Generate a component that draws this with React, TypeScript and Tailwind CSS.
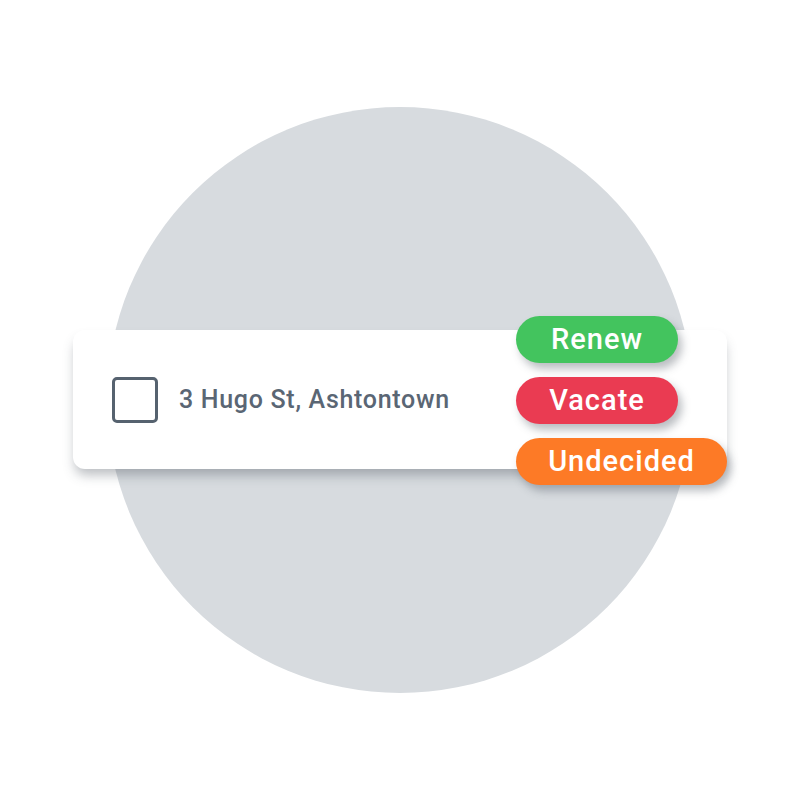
const pills = [
  { label: 'Renew', className: 'w-[162px] bg-[#43c45e]' },
  { label: 'Vacate', className: 'w-[162px] bg-[#ea3b52]' },
  { label: 'Undecided', className: 'w-[211px] bg-[#fd7a26]' },
]

export default function App() {
  return (
    <div
      className="relative flex h-[800px] w-[800px] items-center justify-center bg-white"
      style={{ fontFamily: 'Roboto, "Noto Sans", sans-serif' }}
    >
      <div className="size-[586px] rounded-full bg-[#d7dbdf]" />

      <div className="absolute left-[73px] top-[330px] flex h-[139px] w-[654px] items-center gap-[21px] rounded-[12px] bg-white pl-[39px] shadow-[0_8px_12px_-2px_rgba(60,70,80,0.35)]">
        <div className="size-[46px] rounded-[5px] border-[3.5px] border-[#56626f]" />
        <span className="text-[25px] font-medium tracking-[0.7px] text-[#5a6674]">
          3 Hugo St, Ashtontown
        </span>
      </div>

      <div className="absolute left-[516px] top-[316px] flex flex-col gap-[14px]">
        {pills.map((pill) => (
          <div
            key={pill.label}
            className={`flex h-[47px] items-center justify-center rounded-full pt-[1px] text-[29px] font-medium tracking-[1px] text-white shadow-[4px_6px_8px_rgba(60,70,80,0.35)] ${pill.className}`}
          >
            {pill.label}
          </div>
        ))}
      </div>
    </div>
  )
}
